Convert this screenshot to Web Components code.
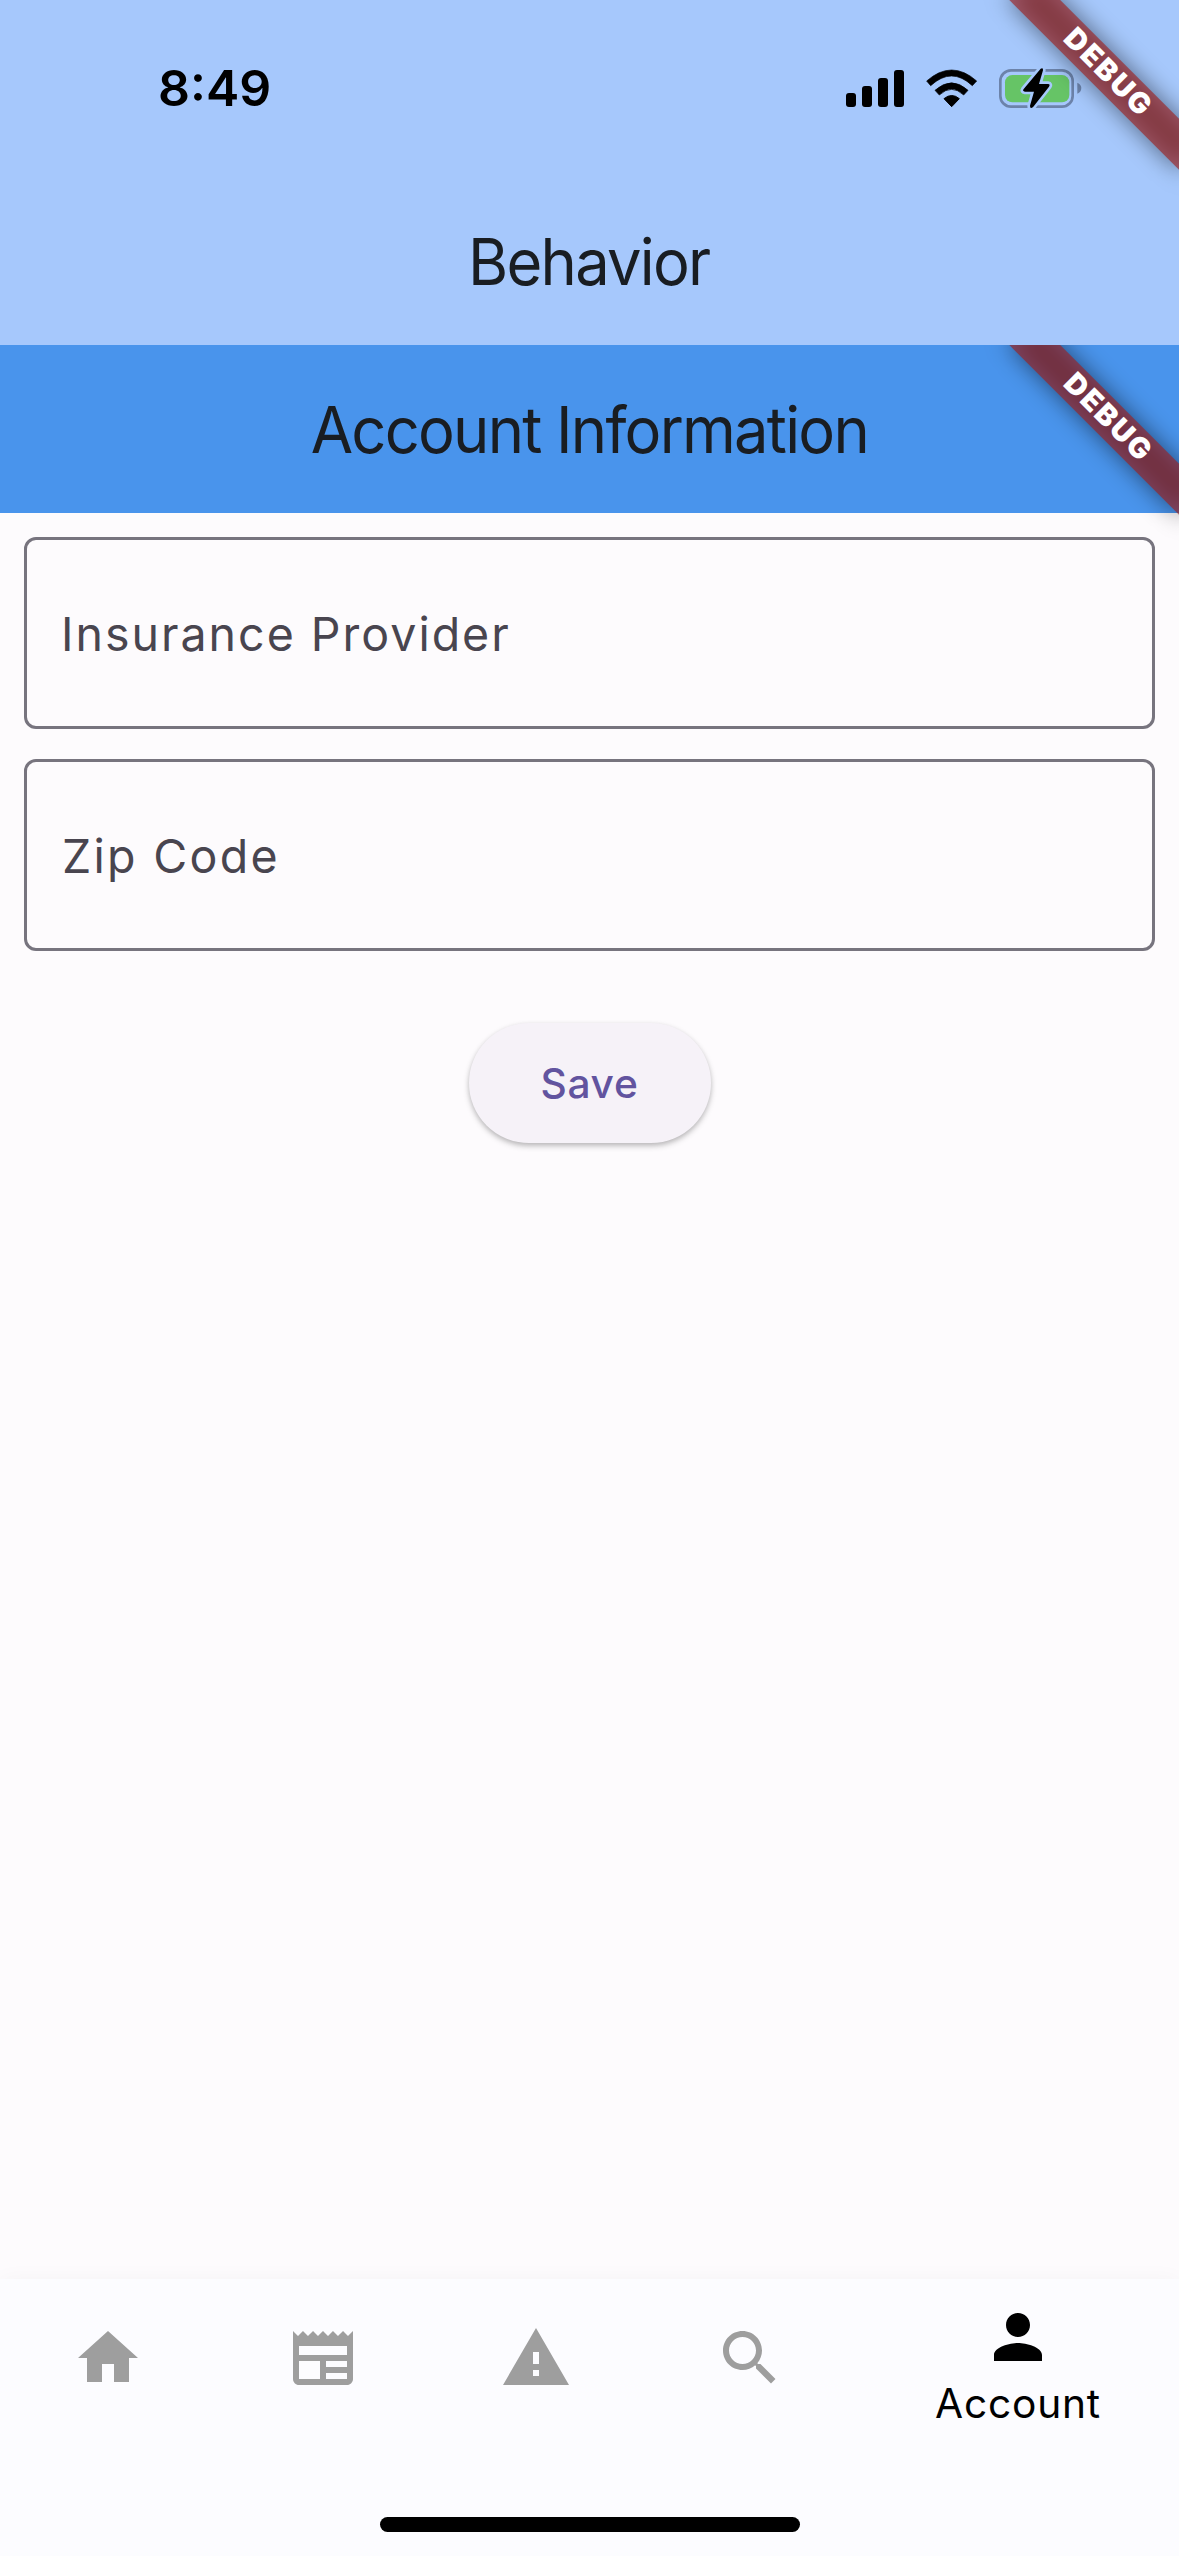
<!DOCTYPE html>
<html lang="en">
<head>
<meta charset="utf-8">
<title>Behavior</title>
<style>
  html, body { margin: 0; height: 100%; }
  body { font-family: Inter, "Liberation Sans", sans-serif; background: #fdfbfd; overflow: hidden; }
</style>
</head>
<body>
<behavior-app></behavior-app>
<script>
const define = (name, html) => {
  const t = document.createElement('template');
  t.innerHTML = html;
  customElements.define(name, class extends HTMLElement {
    constructor() {
      super();
      this.attachShadow({ mode: 'open' }).append(t.content.cloneNode(true));
    }
  });
};

define('debug-banner', `
<style>
  :host { position: absolute; top: 0; right: 0; width: 0; height: 0; pointer-events: none; }
  .turn { position: absolute; left: 0; top: 0; width: 0; height: 0; transform: rotate(45deg); }
  .shadow, .band { position: absolute; left: -120px; top: 84px; width: 240px; height: 36px; }
  .shadow { background: rgba(0,0,0,.5); filter: blur(12px); }
  .band { background: rgba(160,31,28,.627); color: #fff; text-align: center; box-sizing: border-box; padding-left: 3px;
    font-size: 29px; font-weight: 900; line-height: 34px; letter-spacing: 2.2px; }
</style>
<div class="turn"><div class="shadow"></div><div class="band">DEBUG</div></div>`);

define('status-icons', `
<style>
  :host { display: block; }
  svg { display: block; width: 240px; height: 40px; }
</style>
<svg viewBox="72 201 720 120" overflow="visible">
  <rect x="78" y="276" width="30" height="42" rx="9"/>
  <rect x="126" y="255" width="30" height="63" rx="9"/>
  <rect x="174" y="231" width="30" height="87" rx="9"/>
  <rect x="222" y="207" width="30" height="111" rx="9"/>
  <path d="M320 240Q395 174 470 240L457 254Q395 196 332 254Z" stroke="#000" stroke-width="2" stroke-linejoin="round"/>
  <path d="M345 268Q395 223 444 268L431 282Q395 248 358 282Z" stroke="#000" stroke-width="2" stroke-linejoin="round"/>
  <path d="M372 293Q395 274 418 293L395 317Z" stroke="#000" stroke-width="3" stroke-linejoin="round"/>
  <rect x="541" y="208" width="217" height="109" rx="32" fill="none" stroke="#6c83aa" stroke-width="8"/>
  <path d="M772 245Q784 250 784 261Q784 273 772 278Z" fill="#6c83aa"/>
  <rect x="555" y="222" width="193" height="82" rx="22" fill="#66c466"/>
  <path d="M662 203Q670 199 669 208L657 249H684Q692 250 687 257L640 317Q630 326 630 314L642 272H615Q606 271 611 264Z"
    fill="#000" stroke="#a6c8fc" stroke-width="16" paint-order="stroke" stroke-linejoin="round"/>
</svg>`);

define('phone-status', `
<style>
  :host { display: flex; justify-content: space-between; align-items: center; height: 176px; box-sizing: border-box;
    padding: 0 95px 0 158px; color: #000; }
  .time { font-size: 50px; font-weight: 600; line-height: 60px; }
</style>
<span class="time">8:49</span><status-icons></status-icons>`);

define('app-title', `
<style>
  :host { display: flex; justify-content: center; align-items: center; height: 168px; color: #191d22; }
  span { font-size: 64px; line-height: 80px; letter-spacing: -1.82px; white-space: nowrap; transform: scaleX(.96);
    padding: 1px 1px 0 0; }
</style>
<span><slot></slot></span>`);

define('text-field', `
<style>
  :host { display: flex; align-items: center; box-sizing: border-box; height: 192px; border: 3px solid #77747e;
    border-radius: 12px; padding: 2px var(--inset, 34px) 0; color: #49454f; font-size: 46.5px; letter-spacing: var(--track, 2px); }
</style>
<slot></slot>`);

define('elevated-button', `
<style>
  :host { display: flex; align-items: center; justify-content: center; width: 242px; height: 120px; border-radius: 60px;
    background: #f6f2f8; color: #62549f; font-size: 40.7px; font-weight: 500; letter-spacing: .7px;
    box-shadow: 0 3px 6px rgba(0,0,0,.2), 0 2px 4px rgba(0,0,0,.1); }
</style>
<slot></slot>`);

define('nav-item', `
<style>
  :host { display: flex; flex-direction: column; align-items: center; color: #9e9e9e; padding-top: 43px; }
  :host([selected]) { color: #000; padding-top: 22px; }
  ::slotted(svg) { display: block; width: 72px; height: 72px; fill: currentColor; }
  .label { font-size: 40.7px; line-height: 50px; letter-spacing: .8px; margin-top: 6px; }
</style>
<slot name="icon"></slot><span class="label"><slot></slot></span>`);

define('bottom-nav', `
<style>
  :host { display: flex; flex-direction: column; justify-content: space-between; height: 277px; background: #fcfcff;
    box-shadow: 0 0 20px rgba(60,30,60,.035); }
  .items { display: grid; grid-template-columns: 216px 214px 212px 216px 320px; }
  .home { align-self: center; width: 420px; height: 15px; border-radius: 8px; background: #000; margin-bottom: 24px; }
</style>
<div class="items">
  <nav-item><svg slot="icon" viewBox="0 0 24 24"><path d="M10 20v-6h4v6h5v-8h3L12 3 2 12h3v8z"/></svg></nav-item>
  <nav-item><svg slot="icon" viewBox="0 0 24 24"><path d="M22 3l-1.67 1.67L18.67 3 17 4.67 15.33 3l-1.66 1.67L12 3l-1.67 1.67L8.67 3 7 4.67 5.33 3 3.67 4.67 2 3v16c0 1.1.9 2 2 2h16c1.1 0 2-.9 2-2V3zM11 19H4v-6h7v6zm9 0h-7v-2h7v2zm0-4h-7v-2h7v2zm0-4H4V8h16v3z"/></svg></nav-item>
  <nav-item><svg slot="icon" viewBox="0 0 24 24"><path d="M1 21h22L12 2 1 21zm12-3h-2v-2h2v2zm0-4h-2v-4h2v4z"/></svg></nav-item>
  <nav-item><svg slot="icon" viewBox="0 0 24 24"><path d="M15.5 14h-.79l-.28-.27C15.41 12.59 16 11.11 16 9.5 16 5.91 13.09 3 9.5 3S3 5.91 3 9.5 5.91 16 9.5 16c1.61 0 3.09-.59 4.23-1.57l.27.28v.79l5 4.99L20.49 19l-4.99-5zm-6 0C7.01 14 5 11.99 5 9.5S7.01 5 9.5 5 14 7.01 14 9.5 11.99 14 9.5 14z"/></svg></nav-item>
  <nav-item selected><svg slot="icon" viewBox="0 0 24 24"><path d="M12 12c2.21 0 4-1.79 4-4s-1.79-4-4-4-4 1.79-4 4 1.79 4 4 4zm0 2c-2.67 0-8 1.34-8 4v2h16v-2c0-2.66-5.33-4-8-4z"/></svg>Account</nav-item>
</div>
<div class="home"></div>`);

define('account-page', `
<style>
  :host { display: flex; flex-direction: column; flex: 1; position: relative; overflow: hidden; }
  .bar { background: #4994ec; }
  form { display: flex; flex-direction: column; gap: 30px; padding: 24px; }
  elevated-button { align-self: center; margin-top: 42px; }
  .zip { --track: 2.3px; --inset: 35px; }
</style>
<app-title class="bar">Account Information</app-title>
<form>
  <text-field>Insurance Provider</text-field>
  <text-field class="zip">Zip Code</text-field>
  <elevated-button>Save</elevated-button>
</form>
<debug-banner></debug-banner>`);

define('behavior-app', `
<style>
  :host { display: flex; flex-direction: column; position: relative; width: 1179px; height: 2556px; overflow: hidden; }
  header { background: #a6c8fc; height: 345px; }
  header app-title { height: 171px; }
</style>
<header><phone-status></phone-status><app-title>Behavior</app-title></header>
<account-page></account-page>
<bottom-nav></bottom-nav>
<debug-banner></debug-banner>`);
</script>
</body>
</html>
